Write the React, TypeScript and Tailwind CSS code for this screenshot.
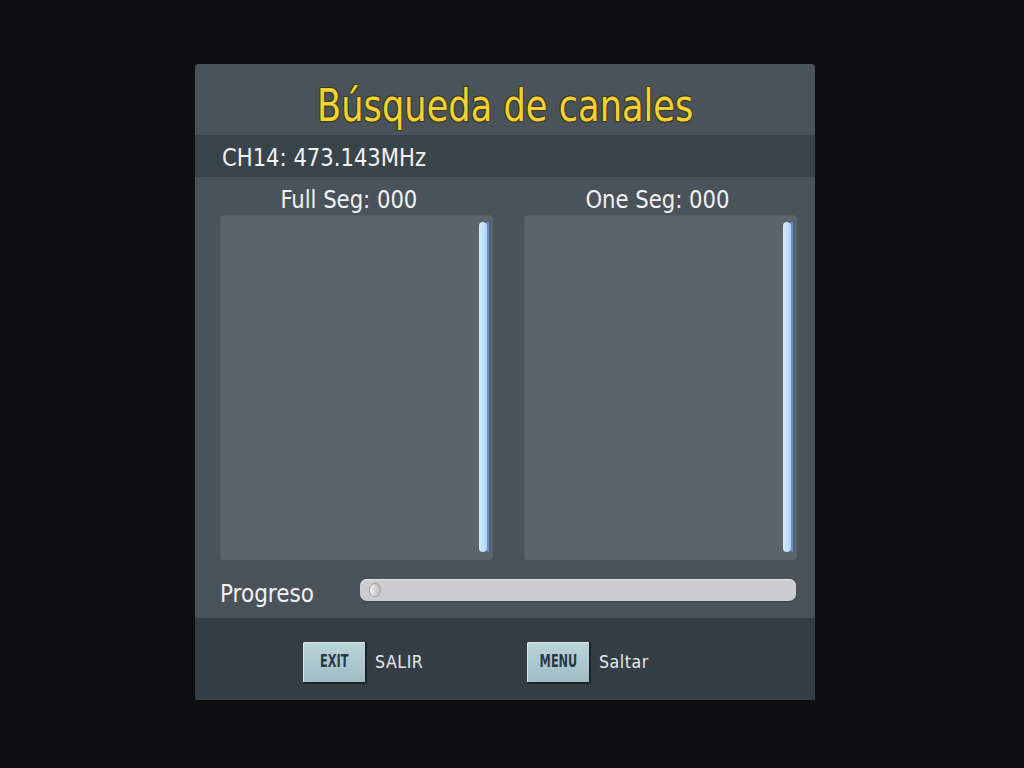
import React from "react";

const face = "font-['DejaVu_Sans_Condensed','DejaVu_Sans',sans-serif] [font-stretch:condensed]";

function ScrollBar() {
  return (
    <div className="absolute right-[4px] top-[7px] bottom-[8px] w-[10px] flex">
      <div className="h-full w-[8px] rounded-full bg-gradient-to-r from-[#d8ecfa] to-[#aed4f2]" />
      <div className="h-full w-[2px] rounded-full bg-[#6a8cd4]" />
    </div>
  );
}

function ListBox() {
  return (
    <div className="relative h-[345px] w-[273px] rounded-[4px] bg-[#5c646c] shadow-[inset_1px_1px_0_#545c64]">
      <ScrollBar />
    </div>
  );
}

function KeyHint({ k, label }: { k: string; label: string }) {
  return (
    <div className="flex items-center gap-[8px]">
      <div className="flex h-[42px] w-[64px] items-center justify-center rounded-[2px] border-b-[2px] border-r-[2px] border-[#1c2227] bg-gradient-to-b from-[#bcd5db] to-[#9fbcc5] shadow-[inset_1px_1px_0_#d9e8ec]">
        <span className={`${face} inline-block scale-x-[0.74] text-[17px] font-bold text-[#2a3944]`}>{k}</span>
      </div>
      <span className="font-['DejaVu_Sans',sans-serif] inline-block origin-left scale-x-[0.93] text-[17px] tracking-[0.6px] text-[#e6e9eb]">
        {label}
      </span>
    </div>
  );
}

export default function App() {
  return (
    <div className="min-h-[768px] w-full bg-[#0f0f11] pt-[64px]">
      <div className="ml-[195px] flex h-[636px] w-[620px] flex-col overflow-hidden rounded-t-[4px] bg-[#4a525a]">
        <div className="flex h-[71px] items-center justify-center pt-[12px]">
          <span
            className={`${face} inline-block scale-x-[0.87] text-[45px] leading-none text-[#f5d232] [text-shadow:-1px_-1px_0_#3a3a1a,1px_-1px_0_#3a3a1a,-1px_1px_0_#3a3a1a,1px_1px_0_#3a3a1a]`}
          >
            Búsqueda de canales
          </span>
        </div>
        <div className="flex h-[42px] items-center bg-[#3a444b] pl-[27px] pt-[3px]">
          <span className={`${face} inline-block origin-left scale-x-[0.94] text-[25px] text-[#f2f2f2]`}>
            CH14: 473.143MHz
          </span>
        </div>
        <div className="flex flex-1 flex-col pl-[25px] pr-[18px]">
          <div className="flex gap-[31px]">
            {[
              { t: "Full Seg: 000", pad: "pr-[16px]" },
              { t: "One Seg: 000", pad: "pr-[6px]" },
            ].map(({ t, pad }) => (
              <div key={t} className="flex w-[273px] flex-col">
                <div className={`flex h-[38px] items-center justify-center pt-[8px] ${pad}`}>
                  <span className={`${face} inline-block scale-x-[0.98] text-[24px] text-[#f2f2f2]`}>{t}</span>
                </div>
                <ListBox />
              </div>
            ))}
          </div>
          <div className="flex flex-1 items-center pt-[2px]">
            <span className={`${face} w-[140px] pt-[8px] text-[24px] text-[#f2f2f2]`}>Progreso</span>
            <div className="relative h-[22px] w-[436px] rounded-[7px] bg-[#cdcccf] shadow-[inset_0_1px_0_#e4e3e6,0_1px_0_#3a4249]">
              <div className="absolute left-[9px] top-[4px] h-[14px] w-[12px] rounded-full border border-[#9fa0a4] bg-gradient-to-r from-[#f4f4f4] to-[#b8b8bc]" />
            </div>
          </div>
        </div>
        <div className="flex h-[82px] items-center bg-[#353e45] pl-[108px] pt-[8px]">
          <div className="w-[224px]">
            <KeyHint k="EXIT" label="SALIR" />
          </div>
          <KeyHint k="MENU" label="Saltar" />
        </div>
      </div>
    </div>
  );
}
